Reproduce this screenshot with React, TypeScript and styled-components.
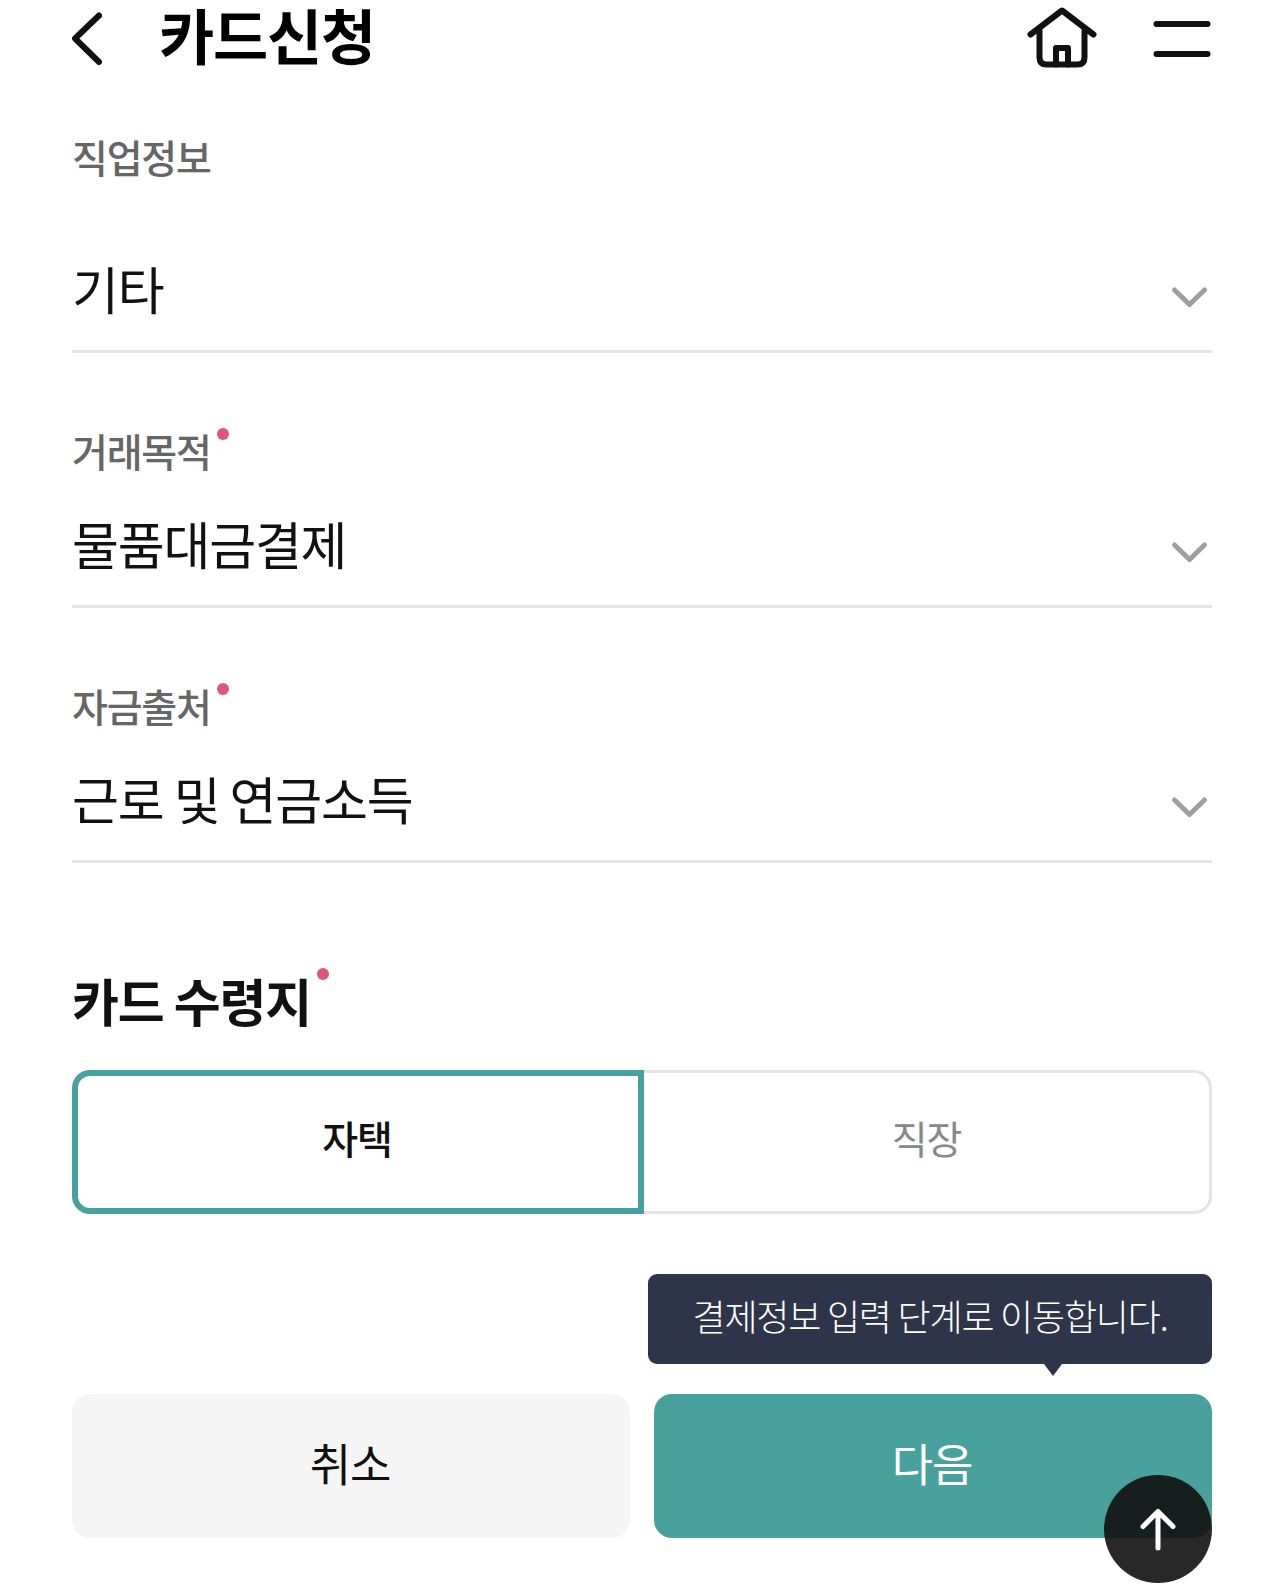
import React from 'react';
import styled, { createGlobalStyle } from 'styled-components';

const GlobalStyle = createGlobalStyle`
  *, *::before, *::after { box-sizing: border-box; }
  body {
    margin: 0;
    background: #fff;
    color: #111;
    font-family: "Noto Sans CJK KR", "Noto Sans", sans-serif;
    letter-spacing: -1.2px;
  }
  button {
    margin: 0;
    padding: 0;
    border: 0;
    background: none;
    color: inherit;
    font: inherit;
    letter-spacing: inherit;
  }
`;

const Page = styled.div`
  position: relative;
  height: 1593px;
  padding: 0 72px;
  overflow: hidden;
`;

const Header = styled.header`
  display: flex;
  align-items: flex-start;
  height: 78px;
`;

const IconButton = styled.button<{ $w: number }>`
  display: block;
  width: ${(p) => p.$w}px;
  height: 78px;
  svg { display: block; }
`;

const Title = styled.h1`
  flex: 1;
  margin: 0 0 0 57px;
  font-size: 60px;
  font-weight: 700;
  line-height: 68px;
  color: #000;
`;

const HeaderActions = styled.div`
  display: flex;
  gap: 54px;
`;

const Form = styled.main`
  display: flex;
  flex-direction: column;
`;

const Field = styled.section<{ $top: number; $gap: number }>`
  display: flex;
  flex-direction: column;
  gap: ${(p) => p.$gap}px;
  padding-top: ${(p) => p.$top}px;
`;

const Label = styled.div`
  display: flex;
  align-items: flex-start;
  height: 54px;
  font-size: 39px;
  font-weight: 500;
  line-height: 48px;
  color: #666;
`;

const RequiredDot = styled.i<{ $top: number }>`
  width: 12px;
  height: 12px;
  margin: ${(p) => p.$top}px 0 0 6px;
  border-radius: 50%;
  background: #df5778;
`;

const Select = styled.button`
  display: flex;
  justify-content: space-between;
  align-items: center;
  height: 125px;
  padding-bottom: 2px;
  border-bottom: 3px solid #e5e5e5;
  font-size: 51px;
  line-height: 72px;
  text-align: left;
`;

const Heading = styled.h2`
  display: flex;
  align-items: flex-start;
  height: 72px;
  margin: 105px 0 0;
  font-size: 51px;
  font-weight: 700;
  line-height: 64px;
`;

const Segments = styled.div`
  display: flex;
  height: 144px;
  margin-top: 30px;
`;

const Segment = styled.button<{ $active?: boolean }>`
  flex: ${(p) => (p.$active ? '0 0 572px' : '1')};
  padding: ${(p) => (p.$active ? '0 2px 10px 0' : '0 0 10px')};
  border: ${(p) => (p.$active ? '6px solid #48a19d' : '3px solid #e5e5e5')};
  border-left-width: ${(p) => (p.$active ? '6px' : '0')};
  border-radius: ${(p) => (p.$active ? '18px 0 0 18px' : '0 18px 18px 0')};
  font-size: 39px;
  font-weight: ${(p) => (p.$active ? 500 : 400)};
  color: ${(p) => (p.$active ? '#111' : '#888')};
`;

const Tooltip = styled.div`
  position: relative;
  align-self: flex-end;
  width: 564px;
  height: 90px;
  margin-top: 60px;
  border-radius: 9px;
  background: #2e354b;
  color: #fff;
  font-size: 36px;
  font-weight: 300;
  line-height: 82px;
  text-align: center;
  white-space: nowrap;

  &::after {
    content: '';
    position: absolute;
    top: 100%;
    right: 150px;
    border: 9px solid transparent;
    border-top: 12px solid #2e354b;
    border-bottom: 0;
  }
`;

const Actions = styled.div`
  display: grid;
  grid-template-columns: 1fr 1fr;
  gap: 24px;
  margin-top: 30px;
`;

const ActionButton = styled.button<{ $primary?: boolean }>`
  height: 144px;
  padding: 0 2px 8px 0;
  border-radius: 18px;
  background: ${(p) => (p.$primary ? '#48a19d' : '#f5f5f5')};
  color: ${(p) => (p.$primary ? '#fff' : '#111')};
  font-size: 45px;
`;

const TopButton = styled.button`
  position: absolute;
  right: 72px;
  bottom: 10px;
  width: 108px;
  height: 108px;
  border-radius: 50%;
  background: rgba(17, 17, 17, 0.9);
  svg { display: block; }
`;

const Chevron = () => (
  <svg width="48" height="48" viewBox="0 0 48 48" fill="none" stroke="#9f9f9f" strokeWidth="5" strokeLinecap="round" strokeLinejoin="round">
    <path d="M10.5 26 25.5 40.5 40.5 26" />
  </svg>
);

const fields = [
  { label: '직업정보', value: '기타', required: false, top: 54, gap: 42 },
  { label: '거래목적', value: '물품대금결제', required: true, top: 73, gap: 3 },
  { label: '자금출처', value: '근로 및 연금소득', required: true, top: 73, gap: 3 },
];

export default function App() {
  return (
    <Page>
      <GlobalStyle />
      <Header>
        <IconButton $w={30} aria-label="뒤로">
          <svg width="30" height="78" fill="none" stroke="#111" strokeWidth="6" strokeLinecap="round" strokeLinejoin="round">
            <path d="M27 15.5 3 38.5 27 62" />
          </svg>
        </IconButton>
        <Title>카드신청</Title>
        <HeaderActions>
          <IconButton $w={72} aria-label="홈">
            <svg width="72" height="78" fill="none" stroke="#111" strokeWidth="6" strokeLinecap="round" strokeLinejoin="round">
              <path d="M4.5 34.5 36 10.5 67.5 34.5M13.5 29V57.5Q13.5 64.5 20.5 64.5H51.5Q58.5 64.5 58.5 57.5V29" />
              <path d="M30 64.5V48H42V64.5" />
            </svg>
          </IconButton>
          <IconButton $w={60} aria-label="메뉴">
            <svg width="60" height="78" fill="none" stroke="#111" strokeWidth="6" strokeLinecap="round">
              <path d="M4.5 24H55.5M4.5 54H55.5" />
            </svg>
          </IconButton>
        </HeaderActions>
      </Header>
      <Form>
        {fields.map((f) => (
          <Field key={f.label} $top={f.top} $gap={f.gap}>
            <Label>
              {f.label}
              {f.required && <RequiredDot $top={2} />}
            </Label>
            <Select>
              {f.value}
              <Chevron />
            </Select>
          </Field>
        ))}
        <Heading>
          카드 수령지
          <RequiredDot $top={0} />
        </Heading>
        <Segments>
          <Segment $active>자택</Segment>
          <Segment>직장</Segment>
        </Segments>
        <Tooltip>결제정보 입력 단계로 이동합니다.</Tooltip>
        <Actions>
          <ActionButton>취소</ActionButton>
          <ActionButton $primary>다음</ActionButton>
        </Actions>
      </Form>
      <TopButton aria-label="맨 위로">
        <svg width="108" height="108" fill="none" stroke="#fff" strokeWidth="5" strokeLinecap="round" strokeLinejoin="round">
          <path d="M54 36.5V73M39 51.5 54 36.5 69 51.5" />
        </svg>
      </TopButton>
    </Page>
  );
}
